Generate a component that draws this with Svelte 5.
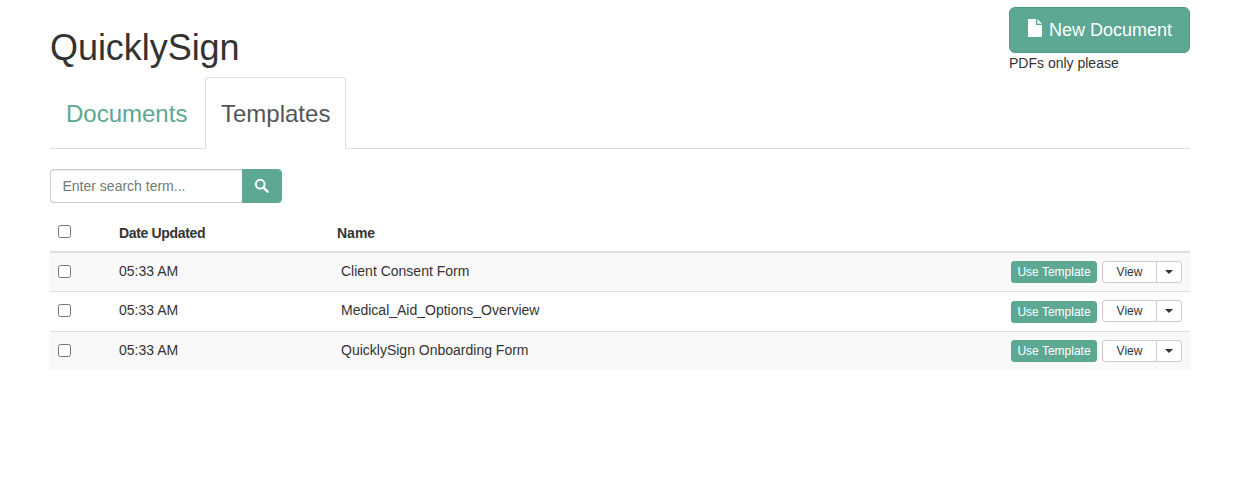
<script>
  const rows = [
    { time: '05:33 AM', name: 'Client Consent Form' },
    { time: '05:33 AM', name: 'Medical_Aid_Options_Overview' },
    { time: '05:33 AM', name: 'QuicklySign Onboarding Form' }
  ];
</script>

<div class="page">
  <header class="head">
    <h1>QuicklySign</h1>
    <div class="upload">
      <button class="btn-new">
        <svg width="14" height="18" viewBox="0 0 14 18"><path d="M0 0H8V6H14V18H0Z M9.3 0L14 4.7H9.3Z" fill="#fff"/></svg>
        <span>New Document</span>
      </button>
      <div class="hint">PDFs only please</div>
    </div>
  </header>

  <nav class="tabs">
    <a class="tab">Documents</a>
    <a class="tab active">Templates</a>
  </nav>

  <div class="search">
    <input placeholder="Enter search term..." />
    <button aria-label="Search">
      <svg width="15" height="15" viewBox="0 0 15 15"><circle cx="6.2" cy="6.2" r="4.4" fill="none" stroke="#fff" stroke-width="2"/><path d="M9.6 9.6L13.6 13.6" stroke="#fff" stroke-width="2.4" stroke-linecap="round"/></svg>
    </button>
  </div>

  <table>
    <thead>
      <tr>
        <th class="c0"><input type="checkbox" /></th>
        <th class="c1"><span class="tight">Date Updated</span></th>
        <th>Name</th>
        <th></th>
      </tr>
    </thead>
    <tbody>
      {#each rows as row}
        <tr>
          <td class="c0"><input type="checkbox" /></td>
          <td class="c1">{row.time}</td>
          <td class="name">{row.name}</td>
          <td class="actions">
            <div class="act">
              <button class="use">Use Template</button>
              <div class="group">
                <button class="view">View</button>
                <button class="caret" aria-label="More"><i></i></button>
              </div>
            </div>
          </td>
        </tr>
      {/each}
    </tbody>
  </table>
</div>

<style>
  :global(body) {
    margin: 0;
    background: #fff;
    color: #333;
    font-family: "Liberation Sans", Arial, sans-serif;
    font-size: 14px;
    line-height: 20px;
  }
  .page {
    padding: 7px 44px 0 50px;
  }
  .head {
    display: flex;
    justify-content: space-between;
    align-items: flex-start;
    height: 70px;
  }
  h1 {
    margin: 21px 0 0;
    font-size: 36px;
    font-weight: 500;
    line-height: 40px;
    letter-spacing: -0.05px;
  }
  .btn-new {
    display: flex;
    align-items: center;
    gap: 7px;
    box-sizing: border-box;
    width: 181px;
    height: 46px;
    padding: 0 10px 0 18px;
    background: #5ca893;
    border: 1px solid #4f9a85;
    border-radius: 6px;
    color: #fff;
    font: 18px/24px "Liberation Sans", Arial, sans-serif;
    white-space: nowrap;
  }
  .btn-new svg { margin-top: -4px; flex: none; }
  .hint { margin-top: 0; line-height: 20px; }
  .tabs {
    display: flex;
    height: 71px;
    border-bottom: 1px solid #ddd;
  }
  .tab {
    box-sizing: border-box;
    width: 153px;
    height: 72px;
    padding: 19px 15px 0;
    margin-right: 2px;
    border: 1px solid transparent;
    border-bottom: 0;
    border-radius: 4px 4px 0 0;
    color: #5ca893;
    font-size: 24px;
    line-height: 34px;
    white-space: nowrap;
  }
  .tab.active {
    width: 141px;
    color: #555;
    background: #fff;
    border-color: #ddd;
  }
  .search {
    display: flex;
    width: 232px;
    height: 34px;
    margin-top: 20px;
  }
  .search input {
    box-sizing: border-box;
    flex: 1;
    min-width: 0;
    height: 34px;
    padding: 6px 11.5px;
    border: 1px solid #ccc;
    border-right: 0;
    border-radius: 4px 0 0 4px;
    font: 14px/20px "Liberation Sans", Arial, sans-serif;
    color: #555;
    box-shadow: inset 0 1px 1px rgba(0,0,0,.075);
    outline: none;
  }
  .search input::placeholder { color: #6f7a75; opacity: 1; }
  .search button {
    display: flex;
    align-items: center;
    justify-content: center;
    width: 40px;
    padding: 0 2px 2px 0;
    background: #5ca893;
    border: 1px solid #5ca893;
    border-radius: 0 4px 4px 0;
  }
  table {
    width: 1140px;
    margin-top: 11px;
    border-collapse: separate;
    border-spacing: 0;
    table-layout: fixed;
  }
  th {
    height: 39px;
    padding: 0 8px;
    text-align: left;
    font-weight: bold;
    border-bottom: 2px solid #ddd;
    box-sizing: border-box;
  }
  .tight { letter-spacing: -0.33px; }
  th.c0 { width: 61px; }
  th.c1 { width: 218px; }
  th:last-child { width: 400px; }
  input[type="checkbox"] {
    display: block;
    width: 13px;
    height: 13px;
    margin: 0;
  }
  th input[type="checkbox"] { margin-top: -3px; }
  td {
    height: 39px;
    padding: 0 8px 2px;
    border-top: 1px solid #ddd;
    box-sizing: border-box;
  }
  tbody tr:first-child td { border-top: 0; height: 38px; }
  tbody tr:nth-child(2) td { height: 40px; padding-bottom: 3px; }
  tbody tr:nth-child(3) td { height: 39px; }
  tbody tr:nth-child(odd) { background: #f9f9f9; }
  tbody tr td.actions { padding-bottom: 0; }
  td.name { padding-left: 12px; }
  .act {
    display: flex;
    justify-content: flex-end;
    gap: 5px;
  }
  .act button {
    box-sizing: border-box;
    height: 22px;
    font: 12px/18px "Liberation Sans", Arial, sans-serif;
  }
  .use {
    width: 86px;
    padding: 0;
    background: #5ca893;
    border: 1px solid #5ca893;
    border-radius: 3px;
    color: #fff;
  }
  .group { display: flex; }
  tbody tr:nth-child(2) .group { margin: -1px 0 1px; }
  .view {
    width: 55px;
    padding: 0;
    background: #fff;
    border: 1px solid #ccc;
    border-radius: 3px 0 0 3px;
    color: #333;
  }
  .caret {
    display: flex;
    align-items: center;
    justify-content: center;
    width: 26px;
    margin-left: -1px;
    padding: 0;
    background: #fff;
    border: 1px solid #ccc;
    border-radius: 0 3px 3px 0;
  }
  .caret i {
    display: block;
    border-top: 4px solid #333;
    border-left: 4px solid transparent;
    border-right: 4px solid transparent;
  }
</style>
